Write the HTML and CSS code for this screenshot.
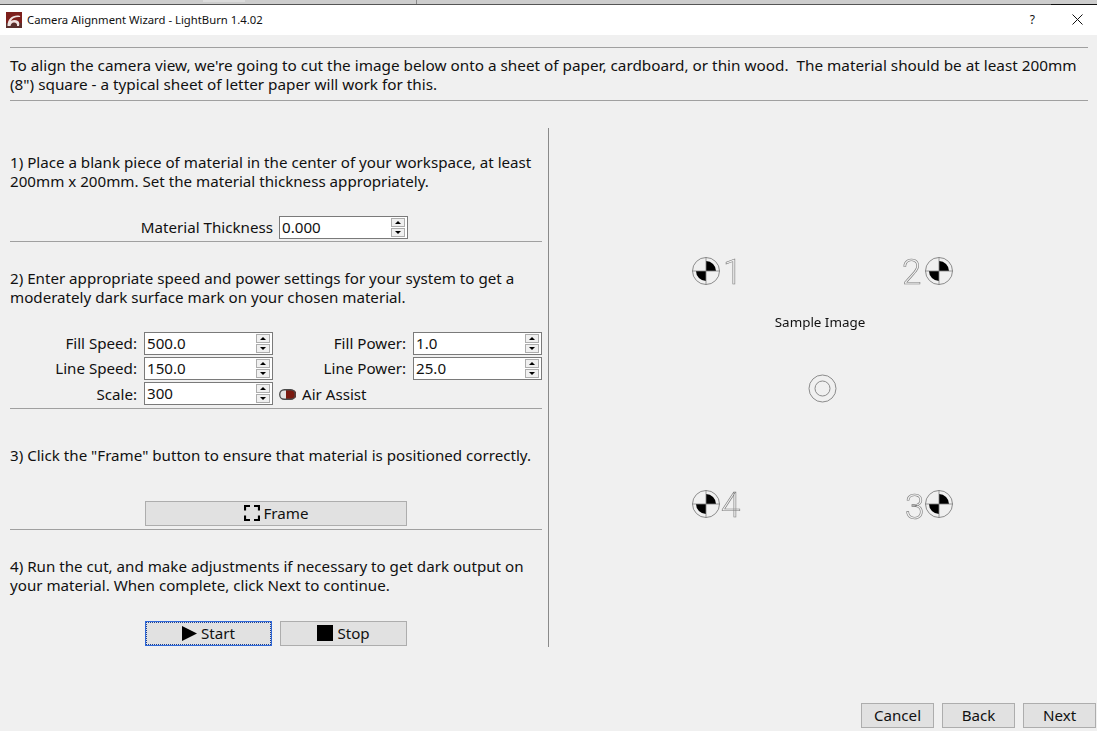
FILE: index.html
```html
<!DOCTYPE html>
<html lang="en">
<head>
<meta charset="utf-8">
<title>Camera Alignment Wizard - LightBurn 1.4.02</title>
<link rel="stylesheet" href="styles.css">
</head>
<body>
<div class="window">
  <div class="strip"><span class="strip-tab"></span><span class="strip-tick"></span><span class="strip-end"></span></div>
  <header class="titlebar">
    <svg class="app-icon" viewBox="0 0 16 16"><rect width="16" height="16" fill="#7d1f1c"/><rect y="11" width="16" height="5" fill="#5a2f2c"/><path d="M1.500 14 C1.500 7 6 3 12.500 3.500 C14 3.600 14.500 4.500 14 5 C10 4.500 6 6 5 9 C7 7.500 10 7.500 12 9 C13.500 10.200 13.500 12 13 14 L11 14 C11.500 12 10 10.500 8 10.500 C6 10.500 5 12 4.500 14 Z" fill="#f0e4e2"/></svg>
    <span class="title">Camera Alignment Wizard - LightBurn 1.4.02</span>
    <span class="help">?</span>
    <svg class="close" viewBox="0 0 11 11"><path d="M.5.500 10.500 10.500M10.500.500 .5 10.500" stroke="#111" stroke-width="1" fill="none"/></svg>
  </header>
  <main class="content">
    <section class="intro">
      <p>To align the camera view, we're going to cut the image below onto a sheet of paper, cardboard, or thin wood.&nbsp; The material should be at least 200mm (8") square - a typical sheet of letter paper will work for this.</p>
    </section>
    <div class="columns">
      <div class="steps">
        <section class="step step-1">
          <p>1) Place a blank piece of material in the center of your workspace, at least 200mm x 200mm. Set the material thickness appropriately.</p>
          <div class="thickness">
            <label class="field-label">Material Thickness</label>
            <div class="spin"><span class="spin-value">0.000</span><span class="arrows"><i class="up"></i><i class="down"></i></span></div>
          </div>
        </section>
        <section class="step step-2">
          <p>2) Enter appropriate speed and power settings for your system to get a moderately dark surface mark on your chosen material.</p>
          <div class="settings">
            <label class="field-label">Fill Speed:</label>
            <div class="spin"><span class="spin-value">500.0</span><span class="arrows"><i class="up"></i><i class="down"></i></span></div>
            <label class="field-label">Fill Power:</label>
            <div class="spin"><span class="spin-value">1.0</span><span class="arrows"><i class="up"></i><i class="down"></i></span></div>
            <label class="field-label">Line Speed:</label>
            <div class="spin"><span class="spin-value">150.0</span><span class="arrows"><i class="up"></i><i class="down"></i></span></div>
            <label class="field-label">Line Power:</label>
            <div class="spin"><span class="spin-value">25.0</span><span class="arrows"><i class="up"></i><i class="down"></i></span></div>
            <label class="field-label label-low">Scale:</label>
            <div class="spin"><span class="spin-value">300</span><span class="arrows"><i class="up"></i><i class="down"></i></span></div>
            <div class="air">
              <svg class="toggle" viewBox="0 0 17 11"><path d="M8 1.500H4.500a4 4 0 0 0 0 8H8z" fill="#e4e4e4"/><path d="M7 .8h6a4.700 4.700 0 0 1 0 9.400H7z" fill="#7a1a10"/><rect x=".75" y=".75" width="15.500" height="9.500" rx="4.500" fill="none" stroke="#4a4a4a" stroke-width="1.300"/></svg>
              <span>Air Assist</span>
            </div>
          </div>
        </section>
        <section class="step step-3">
          <p>3) Click the "Frame" button to ensure that material is positioned correctly.</p>
          <button class="btn btn-frame" type="button">
            <svg class="ico-frame" viewBox="0 0 16 16"><path d="M1 5.500V1h5M10 1h5v4.500M15 10.500V15h-5M6 15H1v-4.500" fill="none" stroke="#000" stroke-width="2.200"/></svg>
            <span>Frame</span>
          </button>
        </section>
        <section class="step step-4">
          <p>4) Run the cut, and make adjustments if necessary to get dark output on your material. When complete, click Next to continue.</p>
          <div class="run-row">
            <button class="btn btn-run focused" type="button">
              <svg class="ico-play" viewBox="0 0 15 15"><path d="M0 0 15 7.500 0 15z" fill="#000"/></svg><span>Start</span>
            </button>
            <button class="btn btn-run" type="button">
              <svg class="ico-stop" viewBox="0 0 16 16"><rect width="16" height="16" fill="#000"/></svg><span>Stop</span>
            </button>
          </div>
        </section>
      </div>
      <div class="preview">
        <svg class="sample" viewBox="0 0 548 519" aria-label="Sample Image">
          <defs>
            <g id="target">
              <path d="M0 0V-10A10 10 0 0 1 10 0Z" fill="#000"/>
              <path d="M0 0V10A10 10 0 0 1-10 0Z" fill="#000"/>
              <circle r="13.500" fill="none" stroke="#808080" stroke-width=".9"/>
              <path d="M-14 0H14M0-14V14" stroke="#808080" stroke-width=".8"/>
            </g>
          </defs>
          <use href="#target" x="157" y="143"/>
          <use href="#target" x="390" y="143"/>
          <use href="#target" x="157" y="376"/>
          <use href="#target" x="390" y="376"/>
          <text class="digit" x="174" y="156">1</text>
          <text class="digit" x="353" y="156">2</text>
          <text class="digit" x="172" y="389">4</text>
          <text class="digit" x="356" y="391">3</text>
          <text class="caption" x="271" y="199" text-anchor="middle">Sample Image</text>
          <circle cx="273.500" cy="260.500" r="13.500" fill="none" stroke="#808080" stroke-width=".9"/>
          <circle cx="273.500" cy="260.500" r="7.500" fill="none" stroke="#808080" stroke-width=".9"/>
        </svg>
      </div>
    </div>
  </main>
  <footer class="footer">
    <button class="btn btn-foot" type="button">Cancel</button>
    <button class="btn btn-foot" type="button">Back</button>
    <button class="btn btn-foot" type="button">Next</button>
  </footer>
</div>
</body>
</html>
```
FILE: styles.css
```css
* { box-sizing: border-box; }
html, body { margin: 0; height: 100%; }
body {
  background: #f0f0f0;
  color: #111;
  font-family: "Noto Sans", "Open Sans", "Liberation Sans", sans-serif;
  font-size: 15.15px;
  overflow: hidden;
}
p { margin: 0; line-height: 19px; }
.window { width: 1097px; height: 731px; display: flex; flex-direction: column; }
.strip {
  height: 5px; flex: none; background: #cdcdcd; border-bottom: 1px solid #555;
  display: flex;
}
.strip-tab { width: 42px; height: 2px; margin-left: 203px; background: #dcdcdc; }
.strip-tick { width: 1px; height: 4px; margin-left: 171px; background: #8a8a8a; }
.strip-end { width: 46px; height: 5px; margin-left: auto; background: #cdcdcd; border-bottom: 1px solid #111; }
.titlebar {
  height: 30px; flex: none; background: #fff;
  display: flex; align-items: center;
  padding: 0 14px 1px 6px;
  font-size: 11.3px;
}
.app-icon { width: 16px; height: 16px; flex: none; }
.title { margin-left: 5px; flex: 1; }
.help { font-size: 12px; margin-right: 37px; }
.close { width: 11px; height: 11px; flex: none; }
.content { flex: 1; padding: 12px 9px 0 10px; display: flex; flex-direction: column; min-height: 0; }
.intro { border-top: 1px solid #a0a0a0; border-bottom: 1px solid #a0a0a0; height: 54px; padding-top: 8px; font-size: 15.3px; }
.columns { display: flex; margin-top: 27px; }
.steps { width: 532px; flex: none; }
.step-1 { height: 114px; border-bottom: 1px solid #a0a0a0; padding-top: 25px; }
.step-2 { height: 167px; border-bottom: 1px solid #a0a0a0; padding-top: 27px; }
.step-3 { height: 121px; border-bottom: 1px solid #a0a0a0; padding-top: 37px; }
.step-4 { padding-top: 27px; }
.thickness { display: flex; justify-content: flex-end; align-items: center; gap: 6px; margin-top: 25px; padding-right: 134px; }
.thickness .spin { width: 129px; }
.settings {
  display: grid;
  grid-template-columns: 127px 129px 126px 129px;
  column-gap: 7px;
  row-gap: 2px;
  margin-top: 25px;
}
.field-label { text-align: right; line-height: 23px; white-space: nowrap; }
.label-low { padding-top: 1px; }
.spin {
  height: 23px; background: #fff; border: 1px solid #7a7a7a;
  display: flex; align-items: center; justify-content: space-between;
  padding: 0 1px 0 2px;
}
.spin-value { line-height: 21px; }
.arrows { display: flex; flex-direction: column; gap: 1px; width: 14px; margin-right: 1px; }
.arrows i { display: block; height: 9px; background: #f0f0f0; border: 1px solid #adadad; position: relative; }
.arrows i::after {
  content: ""; position: absolute; left: 3px; border-left: 3px solid transparent; border-right: 3px solid transparent;
}
.arrows .up::after { top: 2px; border-bottom: 3px solid #000; }
.arrows .down::after { top: 2px; border-top: 3px solid #000; }
.air { display: flex; align-items: center; gap: 6px; margin-left: -1px; line-height: 23px; padding-top: 1px; }
.toggle { width: 17px; height: 11px; flex: none; }
.btn {
  font: inherit; color: #111; background: #e1e1e1; border: 1px solid #adadad;
  height: 25px; padding: 0 0 1px; display: flex; align-items: center; justify-content: center; gap: 3px;
}
.btn-frame { width: 262px; margin: 36px 0 0 135px; gap: 4px; }
.ico-frame { width: 16px; height: 16px; }
.run-row { display: flex; gap: 8px; margin: 26px 0 0 135px; }
.btn-run { width: 127px; gap: 4px; }
.focused { border: 1px solid #2f68d8; outline: 1px dotted #1d3f90; outline-offset: -2px; }
.ico-play { width: 15px; height: 15px; }
.ico-stop { width: 16px; height: 16px; }
.preview { flex: 1; border-left: 1px solid #8a8a8a; margin-left: 6px; height: 519px; margin-right: -9px; }
.sample { display: block; width: 548px; height: 519px; will-change: transform; }
.digit { font-family: Roboto, "Liberation Sans", sans-serif; font-size: 35px; font-weight: 300; fill: none; stroke: #7c7c7c; stroke-width: .6; }
.caption { font-size: 13.4px; fill: #111; }
.footer { flex: none; display: flex; justify-content: flex-end; gap: 8px; padding: 0 1px 3px 0; }
.btn-foot { width: 73px; }
```
